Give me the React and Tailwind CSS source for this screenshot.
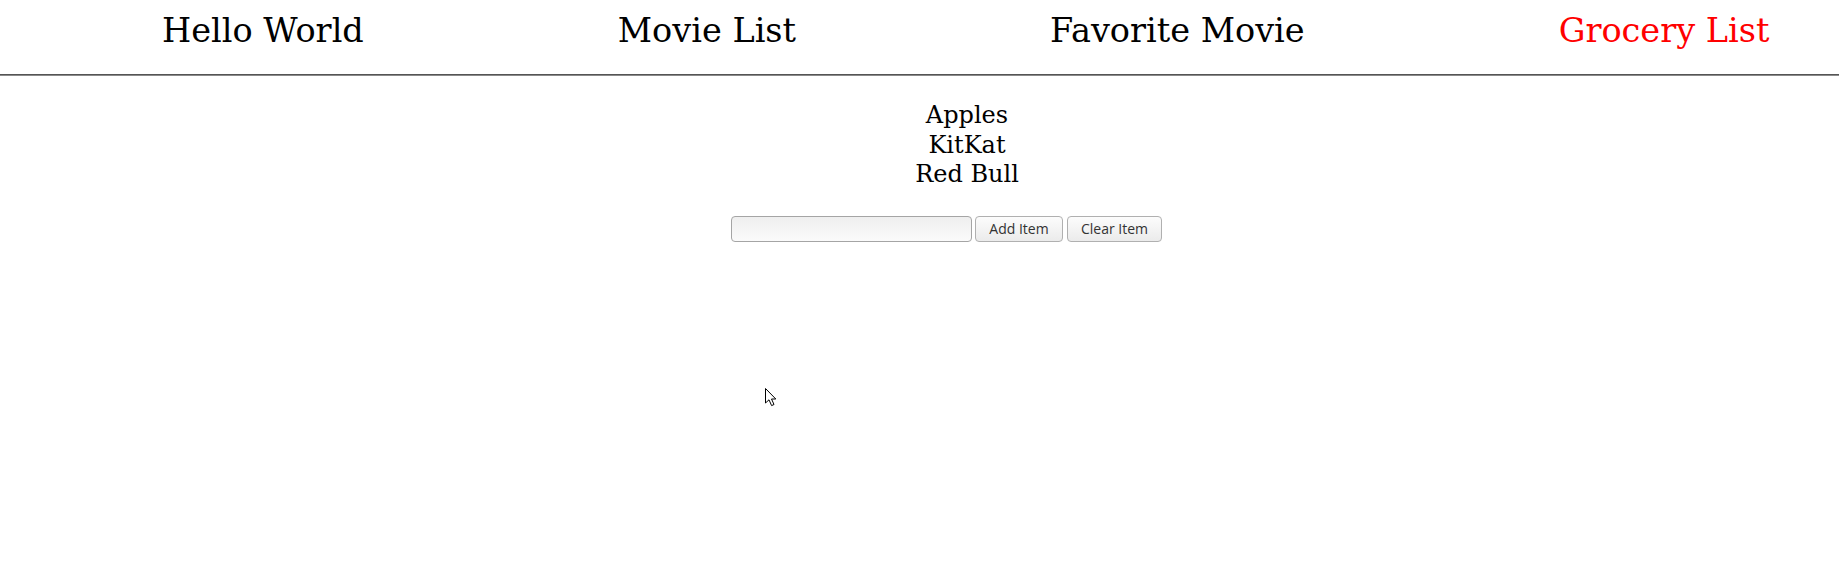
import { useState } from 'react';

const navLinks = ['Hello World', 'Movie List', 'Favorite Movie', 'Grocery List'];

// Mouse pointer visible in the screenshot
function Pointer() {
  return (
    <svg
      className="absolute left-[764px] top-[387px]"
      width="13"
      height="21"
      viewBox="0 0 13 21"
    >
      <path
        d="M1.5 1.5 L1.5 16 L5 12.8 L7.6 18.6 L10 17.5 L7.5 12 L11.8 12 Z"
        fill="#fff"
        stroke="#000"
        strokeWidth="1"
        strokeLinejoin="round"
      />
    </svg>
  );
}

export default function App() {
  const [items, setItems] = useState(['Apples', 'KitKat', 'Red Bull']);
  const [text, setText] = useState('');

  const addItem = () => {
    if (!text.trim()) return;
    setItems([...items, text.trim()]);
    setText('');
  };

  return (
    <div className="relative min-h-[566px] bg-white text-black font-['DejaVu_Serif',serif]">
      {/* Nav */}
      <div className="h-[75px] pt-[11px] border-b border-b-[#555555]">
        <div className="flex gap-[254px] pl-[162px] text-[33.5px] leading-[39px]">
          {navLinks.map((link) => (
            <span
              key={link}
              className={link === 'Grocery List' ? 'text-[#ff0000] whitespace-nowrap' : 'whitespace-nowrap'}
            >
              {link}
            </span>
          ))}
        </div>
      </div>
      <div className="h-px bg-[#8a8a8a]" />

      {/* Grocery items */}
      <div className="pt-[25px] pl-[95px] flex flex-col items-center text-[24px] leading-[29.5px]">
        {items.map((item, i) => (
          <div key={i}>{item}</div>
        ))}
      </div>

      {/* Form */}
      <div className="mt-[26px] pl-[54px] flex justify-center font-['Open_Sans',sans-serif] text-[14px] text-[#333333]">
        <input
          type="text"
          value={text}
          onChange={(e) => setText(e.target.value)}
          className="w-[241px] h-[26px] rounded-[4px] border border-[#a5a5a5] bg-gradient-to-b from-[#efefef] to-[#fbfbfb] px-1 outline-none"
        />
        <button
          onClick={addItem}
          className="ml-[3px] w-[88px] h-[26px] rounded-[4px] border border-[#b0b0b0] bg-gradient-to-b from-[#fcfcfc] to-[#ebebeb] leading-[24px]"
        >
          Add Item
        </button>
        <button
          onClick={() => setItems([])}
          className="ml-[4px] w-[95px] h-[26px] rounded-[4px] border border-[#b0b0b0] bg-gradient-to-b from-[#fcfcfc] to-[#ebebeb] leading-[24px]"
        >
          Clear Item
        </button>
      </div>

      <Pointer />
    </div>
  );
}
